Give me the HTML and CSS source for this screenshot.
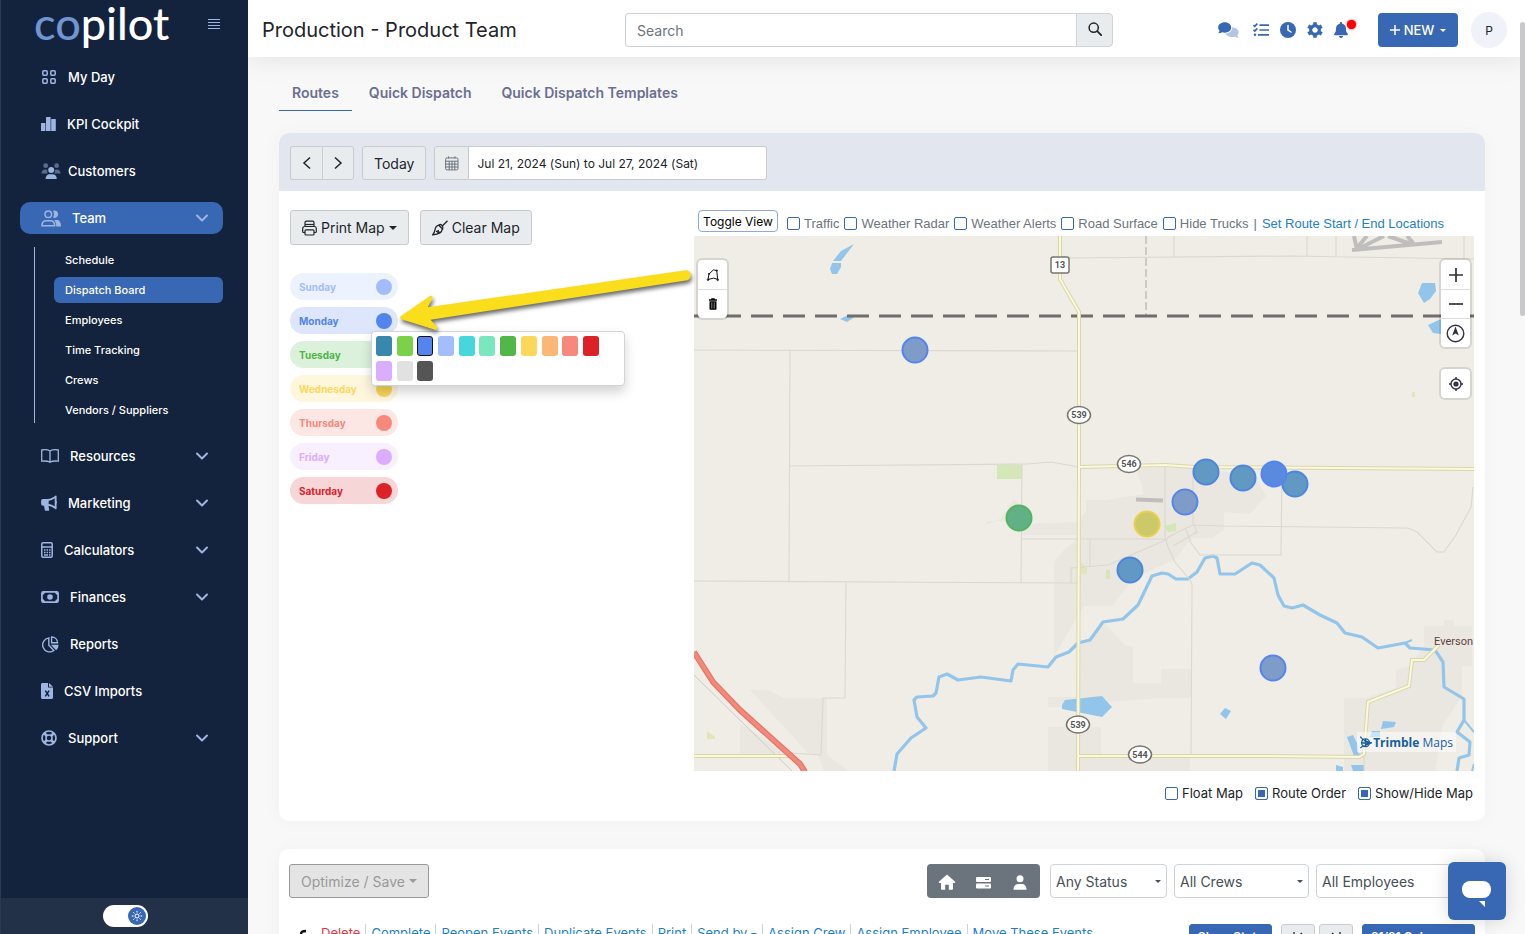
FILE: index.html
```
<!DOCTYPE html>
<html lang="en">
<head>
    <meta charset="UTF-8">
    <meta name="viewport" content="width=device-width, initial-scale=1.0">
    <title>Dispatch Board - Copilot</title>
    <link rel="stylesheet" href="styles.css">
</head>
<body>

<svg class="sprite" aria-hidden="true">
    <symbol id="chevron" viewBox="0 0 14 14"><path d="M2 4.5l5 5 5-5" fill="none" stroke="currentColor" stroke-width="2" stroke-linecap="round" stroke-linejoin="round"/></symbol>
    <symbol id="caret" viewBox="0 0 8 4"><path d="M0 0h8L4 4z" fill="currentColor"/></symbol>
</svg>

<aside class="sidebar">
    <div class="brand">
        <a href="#" class="logo"><span>co</span>pilot</a>
        <button class="menu-btn" aria-label="Collapse menu">
            <svg width="12" height="12" viewBox="0 0 12 12"><path d="M0 1.5h12M0 4.5h12M0 7.5h12M0 10.5h12" stroke="currentColor" stroke-width="1.1"/></svg>
        </button>
    </div>
    <nav class="nav">
        <a href="#" class="nav-item">
            <svg width="16" height="16" viewBox="0 0 16 16" fill="none" stroke="currentColor" stroke-width="1.5"><rect x="1.8" y="1.8" width="4.4" height="4.4" rx="1"/><rect x="9.8" y="1.8" width="4.4" height="4.4" rx="1"/><rect x="1.8" y="9.8" width="4.4" height="4.4" rx="1"/><rect x="9.8" y="9.8" width="4.4" height="4.4" rx="1"/></svg>
            My Day
        </a>
        <a href="#" class="nav-item">
            <svg width="15" height="16" viewBox="0 0 15 16" fill="currentColor"><rect x="0" y="7" width="4.4" height="8" rx=".5"/><rect x="5" y="1" width="4.6" height="14" rx=".5"/><rect x="10.2" y="3" width="4.6" height="12" rx=".5"/></svg>
            KPI Cockpit
        </a>
        <a href="#" class="nav-item nav-wide">
            <svg width="20" height="18" viewBox="0 0 20 18" fill="currentColor"><g opacity=".5"><circle cx="4.7" cy="3.7" r="2.4"/><circle cx="15.6" cy="3.7" r="2.4"/><path d="M.5 11.4c0-2.5 1.6-4 3.6-4 1 0 1.9.3 2.5.8-.6 1-.6 2.2.2 3.2zM13.3 11.4c.7-1 .8-2.2.3-3.2.6-.5 1.4-.8 2.3-.8 2 0 3.6 1.5 3.6 4z"/></g><circle cx="10.2" cy="7.9" r="3"/><path d="M4.6 17c0-3 1.7-4.8 4.2-4.8h2.8c2.5 0 4.2 1.8 4.2 4.8z"/></svg>
            Customers
        </a>
        <a href="#" class="nav-item active">
            <svg width="20" height="17" viewBox="0 0 20 17" fill="none" stroke="currentColor" stroke-width="1.5"><circle cx="7.3" cy="4.3" r="3.3"/><path d="M.9 15.7c0-3.2 1.9-5 4.5-5h3.8c2.6 0 4.5 1.8 4.5 5z"/><path d="M12 .8a3.7 3.7 0 1 1 0 6.8c1.3-2 1.3-4.8 0-6.8zM13.2 10h2.4c2.6 0 4.4 1.9 4.4 6.4h-4.8c0-2.9-.6-4.9-2-6.4z" fill="currentColor" stroke="none"/></svg>
            Team
            <svg class="arrow" width="14" height="14"><use href="#chevron"/></svg>
        </a>
        <div class="subnav">
            <a href="#">Schedule</a>
            <a href="#" class="active">Dispatch Board</a>
            <a href="#">Employees</a>
            <a href="#">Time Tracking</a>
            <a href="#">Crews</a>
            <a href="#">Vendors / Suppliers</a>
        </div>
        <a href="#" class="nav-item">
            <svg width="18" height="14" viewBox="0 0 18 14" fill="none" stroke="currentColor" stroke-width="1.3"><path d="M9 2C6.5.5 3.5.5.7 1v11.2c3-.4 5.8-.4 8.3 1 2.5-1.4 5.3-1.4 8.3-1V1C14.5.5 11.5.5 9 2zM9 2v11"/></svg>
            Resources
            <svg class="arrow" width="14" height="14"><use href="#chevron"/></svg>
        </a>
        <a href="#" class="nav-item">
            <svg width="16" height="16" viewBox="0 0 16 16" fill="currentColor"><path d="M14.6.6c.5-.2 1 0 1 .7v4.900c.6.5.6 1.900 0 2.400v5c0 .7-.5.9-1 .6-2.600-2-4.600-3.100-7.100-3.300l.7 4.200c0 .4-.2.7-.7.7H4.700c-.5 0-.8-.2-.9-.7L3 10.800H2A1.900 1.900 0 0 1 .1 9V6c0-1.100.8-2 1.900-2h4.600c3 0 5.200-1.200 8-3.400zM13.700 3.300c-2 1.400-4 2.300-6 2.500v3.100c2.100.2 4.200 1 6 2.300z" fill-rule="evenodd"/></svg>
            Marketing
            <svg class="arrow" width="14" height="14"><use href="#chevron"/></svg>
        </a>
        <a href="#" class="nav-item">
            <svg width="12" height="16" viewBox="0 0 12 16" fill="none" stroke="currentColor"><rect x=".8" y=".8" width="10.4" height="14.4" rx="1.2" stroke-width="1.5"/><path d="M1 5h10" stroke-width="1.5"/><path d="M3 8h1.500M5.500 8H7M8 8h1.500M3 10.500h1.500M5.500 10.500H7M8 10.500h1.500M3 13h4M8 13h1.500" stroke-width="1.6"/></svg>
            Calculators
            <svg class="arrow" width="14" height="14"><use href="#chevron"/></svg>
        </a>
        <a href="#" class="nav-item">
            <svg width="18" height="12" viewBox="0 0 18 12"><rect x=".9" y=".9" width="16.2" height="10.2" rx="1.4" fill="none" stroke="currentColor" stroke-width="1.7"/><path d="M1 1h3c0 1.500-1.500 3-3 3zM17 1h-3c0 1.500 1.500 3 3 3zM1 11h3c0-1.500-1.500-3-3-3zM17 11h-3c0-1.500 1.500-3 3-3z" fill="currentColor"/><circle cx="9" cy="6" r="2.8" fill="currentColor"/></svg>
            Finances
            <svg class="arrow" width="14" height="14"><use href="#chevron"/></svg>
        </a>
        <a href="#" class="nav-item">
            <svg width="18" height="17" viewBox="0 0 18 17" fill="none" stroke="currentColor" stroke-width="1.4"><path d="M7.800 1.900v7.400l5 5.200A7 7 0 1 1 7.800 1.900z"/><path d="M10.600 1v5.800h6C16.500 3.500 14 1 10.600 1z"/><path d="M11.500 9.500h5.300c0 1.600-.7 2.900-1.700 3.800z" fill="currentColor"/></svg>
            Reports
        </a>
        <a href="#" class="nav-item">
            <svg width="12" height="16" viewBox="0 0 12 16"><path d="M1.500 0H7v4.500h5v10c0 .8-.7 1.500-1.500 1.500h-9C.7 16 0 15.300 0 14.500v-13C0 .7.7 0 1.500 0zM8 0l4 3.700H8z" fill="currentColor"/><path d="M4.300 7.700l3.800 5.600M8.100 7.700l-3.800 5.600" stroke="#14233d" stroke-width="1.5"/></svg>
            CSV Imports
        </a>
        <a href="#" class="nav-item">
            <svg width="16" height="16" viewBox="0 0 16 16" fill="none" stroke="currentColor"><circle cx="8" cy="8" r="7" stroke-width="1.7"/><circle cx="8" cy="8" r="3" stroke-width="1.5"/><path d="M3 3l3 3M13 3l-3 3M3 13l3-3M13 13l-3-3" stroke-width="2.6"/></svg>
            Support
            <svg class="arrow" width="14" height="14"><use href="#chevron"/></svg>
        </a>
    </nav>
    <div class="side-foot">
        <button class="theme-toggle" aria-label="Toggle theme">
            <span><svg width="12" height="12" viewBox="0 0 12 12" fill="none" stroke="#fff"><circle cx="6" cy="6" r="2"/><path d="M6 .8v1.700M6 9.500v1.700M.8 6h1.700M9.500 6h1.700M2.300 2.300l1.200 1.200M8.500 8.500l1.200 1.200M9.700 2.300L8.500 3.500M3.500 8.500L2.300 9.700"/></svg></span>
        </button>
    </div>
</aside>

<main class="main">
    <header class="topbar">
        <h1>Production - Product Team</h1>
        <form class="search">
            <input type="text" placeholder="Search" aria-label="Search">
            <button type="button" aria-label="Search"><svg width="14" height="14" viewBox="0 0 14 14" fill="none" stroke="#212529" stroke-width="1.5"><circle cx="5.700" cy="5.700" r="4.600"/><path d="M9.200 9.200l4 4" stroke-width="1.8" stroke-linecap="round"/></svg></button>
        </form>
        <div class="top-actions">
            <button aria-label="Messages"><svg width="21" height="17" viewBox="0 0 21 17"><path d="M14 5.300c4 .2 6.600 2.400 6.600 5.200 0 1.100-.5 2.200-1.200 3 .2.9.7 1.600 1.300 2.200-1.500.1-2.800-.3-3.900-1-4.300 1.200-8.300-.5-9.300-3.200 4.200-.2 7-2.800 6.500-6.200z" fill="#b4c5e4"/><path d="M6.700.3c3.700 0 6.500 2.300 6.500 5.200s-2.800 5.200-6.500 5.200c-1 0-1.900-.2-2.700-.5-1 .7-2.400 1.200-3.700 1 .6-.7 1.100-1.500 1.200-2.400C.7 7.900.2 6.700.2 5.500.2 2.600 3 .3 6.700.3z" fill="#3868b3"/></svg></button>
            <button aria-label="Tasks"><svg width="16" height="14" viewBox="0 0 16 14" fill="none" stroke="#3868b3" stroke-width="1.5"><path d="M.5 2.200l1.300 1.200L4.300.7M.5 6.800L1.800 8l2.500-2.700M6.500 2.200H16M6.500 7H16M5 11.800h11" stroke-width="1.7"/><circle cx="2" cy="11.800" r="1.300" fill="#3868b3" stroke="none"/></svg></button>
            <button aria-label="History"><svg width="16" height="16" viewBox="0 0 16 16"><circle cx="8" cy="8" r="8" fill="#3868b3"/><path d="M8 3.500V8l3 2" fill="none" stroke="#fff" stroke-width="1.5" stroke-linecap="round"/></svg></button>
            <button aria-label="Settings"><svg width="16" height="16" viewBox="0 0 16 16"><circle cx="8" cy="8" r="4.200" fill="none" stroke="#3868b3" stroke-width="3.4"/><path d="M8 .2v4M8 11.800v4M1.250 4.100l3.400 2M11.350 9.900l3.400 2M1.250 11.900l3.400-2M11.350 6.100l3.400-2" stroke="#3868b3" stroke-width="3.6"/><circle cx="8" cy="8" r="2.500" fill="#fff"/></svg></button>
            <button class="bell" aria-label="Notifications"><svg width="14" height="16" viewBox="0 0 14 16" fill="#3868b3"><path d="M7 0c.6 0 1 .4 1 1v.6c2.300.5 4 2.500 4 4.900 0 2.800.5 4 1.700 5.200.6.600.2 1.500-.6 1.500H.9c-.8 0-1.200-.9-.6-1.500C1.500 10.500 2 9.300 2 6.500c0-2.400 1.700-4.400 4-4.900V1c0-.6.4-1 1-1zM5 14h4c0 1.100-.9 2-2 2s-2-.9-2-2z"/></svg><i class="dot"></i></button>
        </div>
        <button class="btn-new">
            <svg width="10" height="10" viewBox="0 0 10 10"><path d="M5 0v10M0 5h10" stroke="#fff" stroke-width="1.5"/></svg>
            NEW
            <svg class="caret" width="6" height="3"><use href="#caret"/></svg>
        </button>
        <button class="avatar">P</button>
    </header>

    <div class="content">
        <nav class="tabs">
            <a href="#" class="active">Routes</a>
            <a href="#">Quick Dispatch</a>
            <a href="#">Quick Dispatch Templates</a>
        </nav>

        <section class="card">
            <div class="card-head">
                <div class="btn-group">
                    <button aria-label="Previous"><svg width="10" height="14" viewBox="0 0 10 14"><path d="M8 1.500L2 7l6 5.500" fill="none" stroke="#212529" stroke-width="1.5"/></svg></button>
                    <button aria-label="Next"><svg width="10" height="14" viewBox="0 0 10 14"><path d="M2 1.500L8 7l-6 5.500" fill="none" stroke="#212529" stroke-width="1.5"/></svg></button>
                </div>
                <button class="btn">Today</button>
                <div class="date-group">
                    <label for="range" aria-label="Date range"><svg width="14" height="15" viewBox="0 0 14 15" fill="none" stroke="#6c757d"><rect x=".6" y="1.900" width="12.400" height="12" rx="1.500"/><path d="M.6 5.200H13M.6 8.100H13M.6 11H13M4.200 5.200v8.700M7 5.200v8.700M9.800 5.200v8.700M3.500.4v2M10 .4v2"/></svg></label>
                    <input type="text" id="range" value="Jul 21, 2024 (Sun) to Jul 27, 2024 (Sat)">
                </div>
            </div>

            <div class="board">
                <div class="routes">
                    <div class="map-btns">
                        <button class="btn">
                            <svg width="15" height="16" viewBox="0 0 15 16" fill="none" stroke="#212529" stroke-width="1.2"><path d="M3 6.500V2.500c0-.9.5-1.400 1.400-1.400h6.200c.9 0 1.400.5 1.400 1.400v4M3 12.500H1.700c-.6 0-1-.4-1-1v-3c0-1.100.8-2 1.900-2h9.800c1.100 0 1.900.9 1.900 2v3c0 .6-.4 1-1 1H12"/><rect x="3" y="9.800" width="9" height="5.200" rx="1"/><path d="M3 4.500h9"/></svg>
                            Print Map
                            <svg class="caret" width="8" height="4"><use href="#caret"/></svg>
                        </button>
                        <button class="btn">
                            <svg width="16" height="16" viewBox="0 0 16 16" fill="none" stroke="#212529" stroke-width="1.3"><path d="M15.500.7L9.800 6.500M6.800 5.200l4.300 4.300M6.800 5.200c1-.9 2.300-.7 3.200.2.9.9 1.100 2.700.2 3.600-.1 3-2.400 5.300-9.500 5.800 1.500-1.500 1.900-2.900 2.200-4.700.4-2.700 1.700-4.300 3.900-4.900zM4 11.700l2.200-.9-.3 1.900 2.100-.6"/></svg>
                            Clear Map
                        </button>
                    </div>
                    <ul class="days">
                        <li class="sun">Sunday <button aria-label="Sunday color"></button></li>
                        <li class="mon">Monday <button aria-label="Monday color"></button>
                            <div class="palette">
                                <button class="c1" aria-label="Steel"></button>
                                <button class="c2" aria-label="Lime"></button>
                                <button class="c3 selected" aria-label="Blue"></button>
                                <button class="c4" aria-label="Light blue"></button>
                                <button class="c5" aria-label="Cyan"></button>
                                <button class="c6" aria-label="Mint"></button>
                                <button class="c7" aria-label="Green"></button>
                                <button class="c8" aria-label="Yellow"></button>
                                <button class="c9" aria-label="Orange"></button>
                                <button class="c10" aria-label="Salmon"></button>
                                <button class="c11" aria-label="Red"></button>
                                <button class="c12" aria-label="Purple"></button>
                                <button class="c13" aria-label="Light gray"></button>
                                <button class="c14" aria-label="Dark gray"></button>
                            </div>
                            <svg class="pointer" width="300" height="70" viewBox="397 268 300 70"><path d="M402 317.500L431 297.500 424.500 309.500 686 272a3.500 3.500 0 0 1 1.300 6.500L427 318.500 435.500 328z" fill="#fade1c" stroke="#fade1c" stroke-width="3.5" stroke-linejoin="round"/></svg>
                        </li>
                        <li class="tue">Tuesday <button aria-label="Tuesday color"></button></li>
                        <li class="wed">Wednesday <button aria-label="Wednesday color"></button></li>
                        <li class="thu">Thursday <button aria-label="Thursday color"></button></li>
                        <li class="fri">Friday <button aria-label="Friday color"></button></li>
                        <li class="sat">Saturday <button aria-label="Saturday color"></button></li>
                    </ul>
                </div>

                <div class="map-col">
                    <div class="map-tools">
                        <button class="toggle-view">Toggle View</button>
                        <label><input type="checkbox">Traffic</label>
                        <label><input type="checkbox">Weather Radar</label>
                        <label><input type="checkbox">Weather Alerts</label>
                        <label><input type="checkbox">Road Surface</label>
                        <label><input type="checkbox">Hide Trucks</label>
                        <span>|</span>
                        <a href="#">Set Route Start / End Locations</a>
                    </div>
                    <div class="map">
                        <svg class="map-svg" viewBox="694 236 780 535" preserveAspectRatio="xMidYMid slice">
                            <rect x="694" y="236" width="780" height="535" fill="#efede6"/>
                            <!-- built-up areas -->
                            <g fill="#eae7e0">
                                <path d="M1022 524l56-2v13h-56zM985 525l15-6 14-20 4 4v18h-30zM1136 468h60l32 4 30 10 8 14-16 18-26-2v18l-12 8h-20l-18 22-40 18-22 28h-28l-30 50v-94l10-12 12-10 2-20 8-8v-12h20l38-6zM1078 643l12-2 14-18 21 22 8 2 0 36h28v-14h31v29h-31l-83 6zM1344 698h22l30-10v-18l14-4 14-20v-20h20v-6h10v6h18v40h-10v30l-20 30-8 55h-90z"/>
                                <path d="M750 690h18l16 8h43v57l22 16h-25l-6-16-10-2zM740 724l50 30h-50zM1048 727h53v44h-53zM1048 697h48v10h-48zM1078 756h112v15h-112z"/>
                            </g>
                            <g fill="#d4e7b8"><path d="M997 465h25v14h-25z"/><path d="M1164 526l12-3v8l-8 1zM1106 570h4v9h-4z"/></g>
                            <g fill="#e1e5b9"><path d="M1080 562l7 6v6h-7zM707 731l8 6v2h-8zM1412 392h3v5h-3z"/></g>
                            <!-- water -->
                            <g fill="#93c5ea">
                                <path d="M854 244l-13 17h-8l8-10zM832 263h9v4l-4 7h-5l-2-5zM840 319l6-3h10l-9 6zM1422 283h13l1 8-6 8-6 4-6-10zM1428 325l13-6v15l-8-1zM1062 705l3-5 37-4 10 11-10 10-40-8zM1220 714l5-6 6 3-5 8zM1347 737l6-2 4 8 1 10 8 2-12 1zM1383 721l13 1-2 5-13 2zM1336 765l7 2v4h-7zM1351 765h13v6h-11zM1372 731h8v6h-10z"/>
                            </g>
                            <g fill="none" stroke="#93c5ea" stroke-width="3.2" stroke-linejoin="round">
                                <path d="M894 771l3-17 14-16 15-10-9-11-3-17 3-3 16-1 3-3 3-16 8-3 11 6 23-3 30 4 2-11 5-6 30 3 8-10 13-5 9-9 12-3 13-18 20-3 15-14 14-29 10-3 6 1 8 5h12l9-7 8-14 8-2 4 2 3 16h15l17-11 8 2 14 13 4 17 6 11 8 2 11-3 17 10 17 8 8 10 17 4 16 11 27-5 5 5 25 2 8 12 1 25 20 12v21l-7 12 13 10-1 13-10 3-2 13"/>
                                <path d="M1405 643l7-3M1464 720l10 12M1474 764l-2 7" stroke-width="2"/>
                            </g>
                            <!-- local roads -->
                            <g fill="none" stroke="#dbd8cd" stroke-width="1.1">
                                <path d="M694 350l383 1M790 351l-1 230M789 466l238-2 24-2 28 5M694 581l384 2M1022 464l-1 119M846 583l-1 115h-22l-2 57-30-2M1174 236v21M1307 236v20M1336 236v21M1464 236v23M1070 258l220-2 184 3M1022 539l143 0M1090 539v28M1071 583v-15l37-3 60-26M1165 467l0 70 3 10 7 15 15 18 2 5-1 171M1193 467v58l-17 8-9 5M1193 525l30 1 185 2 9 4 20 20h7l12-17 15-28 2-20M1282 468l-1 87h-81l-9-12-5-14M1173 546l24-14-3-8M1364 756v15"/>
                            </g>
                            <path d="M694 675l98 96" fill="none" stroke="#cfcacb"/>
                            <path d="M1146 236v80" fill="none" stroke="#a9a7a4" stroke-dasharray="8 3"/>
                            <!-- airfield runways -->
                            <path d="M1352 250l90-8M1354 236l3 14M1356 249l11-13M1360 248l24-12M1388 236l26 9M1407 236l7 8" fill="none" stroke="#bfbebc" stroke-width="4"/>
                            <path d="M1136 499.500l27 1" stroke="#bfbebc" stroke-width="4"/>
                            <path d="M694 316h780" stroke="#6f6e6c" stroke-width="3" stroke-dasharray="22 10" stroke-dashoffset="7"/>
                            <!-- highways -->
                            <path d="M1060 236v43l19 33v155l-1 304M1079 467l86-2 30 2 279 2M694 756h98M1078 756l187 0 94 1 5-3 4-52 41-16 3-26h12l15-15" fill="none" stroke="#d9d6ae" stroke-width="4"/>
                            <path d="M1060 236v43l19 33v155l-1 304M1079 467l86-2 30 2 279 2M694 756h98M1078 756l187 0 94 1 5-3 4-52 41-16 3-26h12l15-15" fill="none" stroke="#fbf8dc" stroke-width="2"/>
                            <path d="M694 652l19 30 27 28 60 54 5 8" fill="none" stroke="#e97368" stroke-width="6"/>
                            <path d="M694 652l19 30 27 28 60 54 5 8" fill="none" stroke="#f28a7c" stroke-width="3.5"/>
                            <!-- shields -->
                            <g fill="#fff" stroke="#77756f" stroke-width="1.5">
                                <rect x="1051" y="257" width="18" height="16" rx="2"/>
                                <ellipse cx="1079" cy="415" rx="11.5" ry="8.5"/>
                                <ellipse cx="1129" cy="464" rx="11.5" ry="8.5"/>
                                <ellipse cx="1078" cy="724.5" rx="11.5" ry="8.5"/>
                                <ellipse cx="1140" cy="754.5" rx="11.5" ry="8.5"/>
                            </g>
                            <g class="shield-text">
                                <text x="1060" y="268">13</text>
                                <text x="1079" y="418">539</text>
                                <text x="1129" y="467">546</text>
                                <text x="1078" y="728">539</text>
                                <text x="1140" y="758">544</text>
                            </g>
                            <text class="town" x="1473" y="645">Everson</text>
                            <!-- stops -->
                            <g class="stops">
                                <circle class="stop-slate" cx="915" cy="350" r="12.5"/>
                                <circle class="stop-steel" cx="1206" cy="472" r="12.5"/>
                                <circle class="stop-steel" cx="1243" cy="478" r="12.5"/>
                                <circle class="stop-steel" cx="1295" cy="484" r="12.5"/>
                                <circle class="stop-blue" cx="1274" cy="474" r="12.5"/>
                                <circle class="stop-slate" cx="1185" cy="502" r="12.5"/>
                                <circle class="stop-yellow" cx="1147" cy="524" r="12.5"/>
                                <circle class="stop-green" cx="1019" cy="518" r="12.5"/>
                                <circle class="stop-steel" cx="1130" cy="570" r="12.5"/>
                                <circle class="stop-slate" cx="1273" cy="668" r="12.5"/>
                            </g>
                        </svg>
                        <div class="map-ctrl draw">
                            <button aria-label="Draw area"><svg width="14" height="14" viewBox="0 0 14 14" fill="none" stroke="#111"><path d="M2 11.500L3 6l4.500-4.200 3.300.9.8 8.600-4-1.200z"/><circle cx="2" cy="11.700" r=".8"/><circle cx="11.700" cy="11.800" r=".8"/><circle cx="3" cy="5.800" r=".6"/><circle cx="10.800" cy="2.500" r=".6"/></svg></button>
                            <button aria-label="Delete area"><svg width="10" height="12" viewBox="0 0 10 12"><path d="M3.300.3h3.400v1H9v1.500H1V1.300h2.300zM1.500 3.300h7v7.400c0 .6-.4 1-1 1h-5c-.6 0-1-.4-1-1z"/><path d="M3.800 4.500v6M6.200 4.500v6" stroke="#aaa" stroke-width=".8"/></svg></button>
                        </div>
                        <div class="map-side">
                            <div class="map-ctrl">
                                <button aria-label="Zoom in"><svg width="14" height="14" viewBox="0 0 14 14"><path d="M7 0v14M0 7h14" stroke="#333" stroke-width="1.7"/></svg></button>
                                <button aria-label="Zoom out"><svg width="14" height="14" viewBox="0 0 14 14"><path d="M0 7h14" stroke="#333" stroke-width="1.7"/></svg></button>
                                <button aria-label="Reset north"><svg width="19" height="19" viewBox="0 0 19 19"><circle cx="9.500" cy="9.500" r="8.300" fill="none" stroke="#334" stroke-width="1.4"/><path d="M9.500 2.500l3.300 9-3.300-2-3.300 2z" fill="#334"/></svg></button>
                            </div>
                            <div class="map-ctrl">
                                <button aria-label="Locate"><svg width="14" height="14" viewBox="0 0 14 14" fill="none" stroke="#334" stroke-width="1.4"><circle cx="7" cy="7" r="5"/><circle cx="7" cy="7" r="2.600" fill="#334" stroke="none"/><path d="M7 0v2M7 12v2M0 7h2M12 7h2"/></svg></button>
                            </div>
                        </div>
                        <div class="trimble">
                            <svg width="12" height="13" viewBox="0 0 12 13" fill="none" stroke="#175f9e" stroke-width="1.3"><circle cx="5.500" cy="6.700" r="3.900"/><path d="M.3.6l3 3.600M.3 12l3.200-2.500M2 7h9.500M4 4.500c2.500.5 4 1.500 7.500 2.400-3 .8-5 1.900-7 2.600M5.500 3v7"/></svg>
                            <span><b>Trimble</b> Maps</span>
                        </div>
                    </div>
                    <div class="map-opts">
                        <label><input type="checkbox">Float Map</label>
                        <label><input type="checkbox" checked>Route Order</label>
                        <label><input type="checkbox" checked>Show/Hide Map</label>
                    </div>
                </div>
            </div>
        </section>

        <section class="card events">
            <div class="filters">
                <button class="btn" disabled>Optimize / Save <svg class="caret" width="8" height="4"><use href="#caret"/></svg></button>
                <div class="view-group">
                    <button aria-label="Home"><svg width="18" height="16" viewBox="0 0 18 16" fill="#fff"><path d="M9 .5l8.400 7.400-.8 1H15v6c0 .5-.4.8-.8.8h-3.400v-5H7.200v5H3.800c-.4 0-.8-.3-.8-.8v-6H1.400l-.8-1z"/></svg></button>
                    <button aria-label="List"><svg width="15" height="12" viewBox="0 0 15 12"><rect width="15" height="5" rx="1" fill="#fff"/><rect y="6.500" width="15" height="5" rx="1" fill="#fff"/><path d="M9 2.500h4M9 9h4" stroke="#6b747c"/></svg></button>
                    <button aria-label="Crew"><svg width="14" height="15" viewBox="0 0 14 15" fill="#fff"><circle cx="7" cy="3.800" r="3.500"/><path d="M.5 14.700C.5 11 2.500 9 5.300 9h3.400c2.800 0 4.800 2 4.800 5.700z"/></svg></button>
                </div>
                <select class="w-status" aria-label="Status"><option>Any Status</option></select>
                <select class="w-crews" aria-label="Crews"><option>All Crews</option></select>
                <select class="w-employees" aria-label="Employees"><option>All Employees</option></select>
            </div>
            <div class="actions">
                <svg width="11" height="14" viewBox="0 0 11 14"><path d="M2 14V10c0-2.500 1.500-3 5-3" fill="none" stroke="#111" stroke-width="2.5"/></svg>
                <a href="#" class="danger">Delete</a>
                <a href="#">Complete</a>
                <a href="#">Reopen Events</a>
                <a href="#">Duplicate Events</a>
                <a href="#">Print</a>
                <a href="#">Send by <svg class="caret" width="6" height="3"><use href="#caret"/></svg></a>
                <a href="#">Assign Crew</a>
                <a href="#">Assign Employee</a>
                <a href="#">Move These Events</a>
                <div class="table-btns">
                    <button class="btn-sm blue">Show Stats</button>
                    <div class="pager">
                        <button class="btn-sm" aria-label="Collapse"><svg width="12" height="12" viewBox="0 0 12 12" fill="none" stroke="#212529" stroke-width="1.3"><path d="M2 1v10M10 2L5 6.500l5 4.500"/></svg></button>
                        <button class="btn-sm" aria-label="Expand"><svg width="12" height="12" viewBox="0 0 12 12" fill="none" stroke="#212529" stroke-width="1.3"><path d="M10 1v10M2 2l5 4.500L2 11"/></svg></button>
                    </div>
                    <button class="btn-sm blue">21/21 Columns <svg class="caret" width="8" height="4"><use href="#caret"/></svg></button>
                </div>
            </div>
        </section>
    </div>
    <div class="scroll-thumb"></div>
    <button class="chat" aria-label="Open chat"><svg width="30" height="26" viewBox="0 0 30 26" fill="#fff"><rect x="0" y="0" width="29" height="17" rx="8"/><path d="M17 20h6v6z"/></svg></button>
</main>

</body>
</html>
```
FILE: styles.css
```
* {
    box-sizing: border-box;
}
body {
    margin: 0;
    display: flex;
    height: 100vh;
    overflow: hidden;
    font-family: Inter, 'Liberation Sans', sans-serif;
    font-size: 14px;
    color: #212529;
    background: #f8f8f8;
}
a {
    color: #1f80c8;
    text-decoration: none;
}
button, input, select {
    font-family: inherit;
    font-size: inherit;
    color: inherit;
}
button {
    padding: 0;
    border: none;
    background: none;
    cursor: pointer;
}
.sprite {
    position: absolute;
    width: 0;
    height: 0;
}

/* sidebar */
.sidebar {
    width: 248px;
    flex: none;
    display: flex;
    flex-direction: column;
    background: #14233d;
    border-left: 1px solid #2a3a55;
}
.brand {
    display: flex;
    justify-content: space-between;
    height: 61px;
    padding: 0 28px 0 33px;
}
.logo {
    font-family: Lato, sans-serif;
    font-size: 45px;
    font-weight: 500;
    line-height: 46px;
    color: #fff;
}
.logo span {
    color: #7094d4;
}
.menu-btn {
    color: #9db5e0;
    height: 48px;
}
.nav {
    flex: 1;
    padding: 0 25px 0 19px;
}
.nav-item {
    display: flex;
    align-items: center;
    gap: 11px;
    height: 32px;
    margin-bottom: 15px;
    padding: 0 14px 0 21px;
    border-radius: 10px;
    font-size: 13px;
    font-weight: 500;
    color: #fff;
}
.nav-wide {
    gap: 7px;
}
.nav-item svg {
    color: #9db5e0;
    flex: none;
}
.nav-item .arrow {
    margin-left: auto;
}
.nav .active {
    background: #3868b3;
}
.subnav {
    display: flex;
    flex-direction: column;
    gap: 4px;
    margin: -2px 0 17px 14px;
    padding-left: 19px;
    border-left: 1px solid #9db5e0;
}
.subnav a {
    padding-left: 11px;
    line-height: 26px;
    border-radius: 6px;
    font-size: 11px;
    font-weight: 500;
    color: #fff;
}
.side-foot {
    display: flex;
    justify-content: center;
    align-items: center;
    height: 36px;
    padding-left: 2px;
    background: #223048;
}
.theme-toggle {
    display: flex;
    justify-content: flex-end;
    align-items: center;
    width: 45px;
    height: 22px;
    padding: 2px;
    border-radius: 11px;
    background: #fff;
}
.theme-toggle span {
    display: flex;
    align-items: center;
    justify-content: center;
    width: 18px;
    height: 18px;
    border-radius: 50%;
    background: #3868b3;
}

/* top bar */
.main {
    position: relative;
    flex: 1;
    min-width: 0;
    overflow: hidden;
}
.topbar {
    position: relative;
    display: flex;
    align-items: center;
    height: 57px;
    padding: 3px 18px 0 14px;
    background: #fff;
    box-shadow: 0 0 30px rgba(0, 0, 0, 0.1);
}
.topbar h1 {
    width: 363px;
    margin: 0;
    font-size: 20px;
    font-weight: 400;
}
.search {
    display: flex;
    width: 488px;
    height: 34px;
}
.search input {
    flex: 1;
    min-width: 0;
    padding: 0 11px;
    border: 1px solid #ced4da;
    border-right: none;
    border-radius: 4px 0 0 4px;
}
.search input::placeholder {
    color: #6c757d;
}
.search button {
    width: 37px;
    border: 1px solid #ced4da;
    border-radius: 0 4px 4px 0;
    background: #e9ecef;
}
.top-actions {
    display: flex;
    align-items: center;
    gap: 11px;
    margin-left: auto;
}
.top-actions button {
    display: flex;
}
.top-actions button:first-child {
    margin-right: 3px;
}
.top-actions .bell {
    position: relative;
    margin-right: 30px;
}
.dot {
    position: absolute;
    left: 13px;
    top: -2px;
    width: 9px;
    height: 9px;
    border-radius: 50%;
    background: #f00;
    box-shadow: 0 0 2px #f00;
}
.btn-new {
    display: flex;
    align-items: center;
    justify-content: center;
    gap: 4px;
    width: 80px;
    height: 34px;
    margin-right: 13px;
    border-radius: 4px;
    background: #3868b3;
    font-size: 13px;
    font-weight: 500;
    color: #fff;
}
.btn-new .caret {
    margin-left: 2px;
}
.avatar {
    width: 36px;
    height: 36px;
    border-radius: 50%;
    background: #eff2f9;
    font-size: 12px;
}

/* content */
.content {
    padding: 18px 40px 0 31px;
}
.tabs {
    display: flex;
    gap: 4px;
    margin-bottom: 22px;
}
.tabs a {
    padding: 0 13px;
    line-height: 35px;
    border-bottom: 1px solid transparent;
    font-weight: 600;
    color: #6a6f92;
}
.tabs .active {
    border-color: #3868b3;
}
.card {
    margin-bottom: 28px;
    border-radius: 10px;
    background: #fff;
    box-shadow: 0 0 20px rgba(0, 0, 0, 0.03);
}
.card-head {
    display: flex;
    gap: 8px;
    height: 58px;
    padding: 13px 11px 11px;
    border-radius: 10px 10px 0 0;
    background: #e2e6ef;
}
.btn, .btn-group button, .date-group label {
    display: flex;
    align-items: center;
    justify-content: center;
    gap: 4px;
    height: 34px;
    padding: 0 11px;
    border: 1px solid #c9cccf;
    border-radius: 3px;
    background: #e9ecef;
}
.btn-group {
    display: flex;
}
.btn-group button {
    width: 32px;
    padding: 0;
}
.btn-group button:first-child {
    border-right: none;
    border-radius: 3px 0 0 3px;
}
.btn-group button:last-child {
    border-radius: 0 3px 3px 0;
}
.date-group {
    display: flex;
    width: 333px;
}
.date-group label {
    width: 35px;
    padding: 0;
    border-radius: 3px 0 0 3px;
}
.date-group input {
    flex: 1;
    min-width: 0;
    padding: 0 8px;
    border: 1px solid #c9cccf;
    border-left: none;
    border-radius: 0 3px 3px 0;
    font-size: 12px;
}
.board {
    display: flex;
    padding: 19px 11px;
}
.routes {
    width: 404px;
    flex: none;
}
.map-btns {
    display: flex;
    gap: 11px;
    margin-bottom: 28px;
}
.map-btns .btn {
    height: 35px;
}

/* days */
.days {
    display: flex;
    flex-direction: column;
    gap: 7px;
    width: 108px;
    margin: 0;
    padding: 0;
    list-style: none;
}
.days li {
    position: relative;
    display: flex;
    align-items: center;
    justify-content: space-between;
    height: 27px;
    padding: 0 6px 0 9px;
    border-radius: 14px;
    font-size: 10px;
    font-weight: 700;
}
.days li > button {
    width: 16px;
    height: 16px;
    border-radius: 50%;
    background: currentColor;
}
.sun { color: #a3bbff; background: #edf2ff; }
.mon { color: #5383ec; background: #dde6fb; }
.tue { color: #4fb748; background: #dcf1db; }
.wed { color: #fbd75b; background: #fef7de; }
.thu { color: #f6887c; background: #fde7e5; }
.fri { color: #dbadff; background: #f8efff; }
.sat { color: #dc2127; background: #f6d6d7; }
.palette {
    position: absolute;
    z-index: 2;
    left: 81px;
    top: 24px;
    display: grid;
    grid-template-columns: repeat(11, 16px);
    justify-content: space-between;
    row-gap: 5px;
    width: 254px;
    padding: 4px 25px 4px 4px;
    border: 1px solid #ced4da;
    border-radius: 4px;
    background: #fff;
    box-shadow: 0 6px 12px rgba(0, 0, 0, 0.18);
}
.palette button {
    height: 20px;
    border-radius: 3px;
}
.palette .selected {
    border: 1px solid #111;
}
.c1 { background: #3a87ad; }
.c2 { background: #7bd148; }
.c3 { background: #5484ed; }
.c4 { background: #a4bdfc; }
.c5 { background: #46d6db; }
.c6 { background: #7ae7bf; }
.c7 { background: #51b749; }
.c8 { background: #fbd75b; }
.c9 { background: #fbb778; }
.c10 { background: #f6887c; }
.c11 { background: #dc2127; }
.c12 { background: #dbadff; }
.c13 { background: #e1e1e1; }
.c14 { background: #555; }
.pointer {
    position: absolute;
    z-index: 3;
    left: 107px;
    top: -39px;
    filter: drop-shadow(1px 3px 2px rgba(0, 0, 0, 0.6));
    pointer-events: none;
}

/* map */
.map-col {
    flex: 1;
    min-width: 0;
}
.map-tools {
    display: flex;
    gap: 5px;
    align-items: center;
    height: 26px;
    padding-left: 4px;
    font-family: 'Liberation Sans', Arial, sans-serif;
    font-size: 13px;
    color: #6c757d;
    white-space: nowrap;
}
.toggle-view {
    width: 80px;
    height: 22px;
    margin: 0 4px 4px 0;
    border: 1px solid #8da9dd;
    border-radius: 4px;
    font-family: Inter, sans-serif;
    font-size: 12px;
    color: #000;
}
label {
    display: flex;
    align-items: center;
    gap: 4px;
}
input[type="checkbox"] {
    appearance: none;
    flex: none;
    width: 13px;
    height: 13px;
    margin: 0;
    border: 1px solid #3868b3;
    border-radius: 2px;
    background: #fff;
}
input[type="checkbox"]:checked {
    background: #3868b3;
    box-shadow: inset 0 0 0 2px #fff;
}
.map {
    position: relative;
    height: 535px;
    overflow: hidden;
}
.map-svg {
    display: block;
    width: 100%;
    height: 100%;
}
.shield-text {
    font-family: Roboto, sans-serif;
    font-size: 9px;
    font-weight: 700;
    text-anchor: middle;
    fill: #555;
}
.town {
    font-family: Roboto, sans-serif;
    font-size: 11px;
    text-anchor: end;
    fill: #5f4343;
}
.stops circle {
    stroke-width: 2px;
}
.stop-slate { fill: #7f9cc8; stroke: #5484ed; }
.stop-steel { fill: #6198c4; stroke: #4c86dd; }
.stop-blue { fill: #5a8ae0; stroke: #5484ed; }
.stop-yellow { fill: #cbc968; stroke: #edcf50; }
.stop-green { fill: #61b086; stroke: #51b560; }
.map-ctrl {
    border-radius: 4px;
    background: #fff;
    box-shadow: 0 0 0 2px rgba(0, 0, 0, 0.1);
}
.map-ctrl button {
    display: flex;
    align-items: center;
    justify-content: center;
    width: 29px;
    height: 29px;
}
.map-ctrl button + button {
    border-top: 1px solid #ddd;
}
.draw {
    position: absolute;
    left: 4px;
    top: 24px;
}
.map-side {
    position: absolute;
    right: 4px;
    top: 24px;
    display: flex;
    flex-direction: column;
    gap: 22px;
}
.trimble {
    position: absolute;
    right: 18px;
    bottom: 19px;
    display: flex;
    align-items: center;
    gap: 1px;
    height: 20px;
    padding: 0 3px;
    background: rgba(255, 255, 255, 0.5);
    font-family: 'Open Sans', sans-serif;
    font-size: 12px;
    color: #175f9e;
}
.map-opts {
    display: flex;
    justify-content: flex-end;
    gap: 12px;
    padding: 14px 1px 0 0;
    font-size: 13px;
    line-height: 17px;
}

/* events */
.events {
    padding: 15px 10px 40px;
}
.filters {
    display: flex;
    gap: 7px;
    height: 34px;
}
.btn:disabled {
    border-color: #999;
    background: #e4e4e4;
    color: #999;
}
.view-group {
    display: flex;
    width: 113px;
    margin: 0 3px 0 auto;
    padding: 0 2px;
    border-radius: 4px;
    background: #6b747c;
}
.view-group button {
    flex: 1;
}
.view-group svg {
    vertical-align: middle;
}
.filters select {
    appearance: none;
    padding: 0 5px;
    border: 1px solid #ced4da;
    border-radius: 4px;
    color: #495057;
    background: #fff url("data:image/svg+xml,%3Csvg xmlns='http://www.w3.org/2000/svg' width='6' height='3'%3E%3Cpath d='M0 0h6L3 3z' fill='%23495057'/%3E%3C/svg%3E") no-repeat right 5px center;
}
.w-status {
    width: 117px;
}
.w-crews {
    width: 135px;
}
.w-employees {
    width: 159px;
}
.actions {
    display: flex;
    align-items: flex-start;
    gap: 5px;
    margin-top: 26px;
    padding-left: 10px;
    font-size: 12px;
    line-height: 19px;
    white-space: nowrap;
}
.actions a {
    font-size: 13px;
}
.actions a + a {
    padding-left: 5px;
    border-left: 1px solid #ced4da;
}
.actions .danger {
    margin-left: 6px;
    color: #e03a3f;
}
.actions .caret {
    vertical-align: middle;
}
.table-btns {
    display: flex;
    gap: 9px;
    margin-left: auto;
}
.pager {
    display: flex;
    gap: 4px;
}
.btn-sm {
    height: 24px;
    padding: 0 8px;
    border: 1px solid #c9cccf;
    border-radius: 3px;
    background: #e9ecef;
    font-weight: 600;
}
.pager .btn-sm {
    width: 34px;
}
.btn-sm svg {
    vertical-align: middle;
}
.blue {
    border-color: #3868b3;
    background: #3868b3;
    color: #fff;
}
.scroll-thumb {
    position: absolute;
    right: 0;
    top: 22px;
    width: 5px;
    height: 294px;
    border-radius: 3px;
    background: #c9c9cb;
}
.chat {
    position: absolute;
    right: 19px;
    bottom: 14px;
    display: flex;
    align-items: center;
    justify-content: center;
    width: 58px;
    height: 58px;
    padding-top: 6px;
    border-radius: 6px;
    background: #3868b3;
    box-shadow: 0 0 18px rgba(0, 0, 0, 0.15);
}
```
